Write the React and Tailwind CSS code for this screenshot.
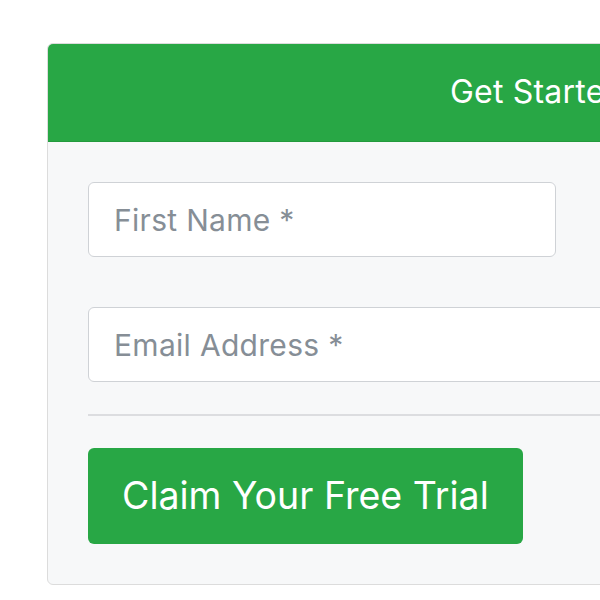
export default function App() {
  return (
    <div className="w-[600px] h-[600px] overflow-hidden bg-white" style={{ fontFamily: 'Inter, "Liberation Sans", Arial, sans-serif' }}>
      <div className="pl-[47px] pt-[43px]">
        <div className="w-[1040px] border border-[#dcdcdc] rounded-[6px] overflow-hidden bg-[#f7f8f9]">
          <div className="h-[98px] bg-[#28a745] border-b border-[#239a3d] flex items-center pl-[402px] pb-[2px]">
            <span className="text-white text-[32px] leading-none tracking-[0.2px]">Get Started Today</span>
          </div>
          <div className="px-[40px] pt-[40px] pb-[40px] flex flex-col">
            <input
              className="w-[468px] h-[75px] bg-white border-[1.5px] border-[#cfd2d6] rounded-[6px] px-[25px] text-[30px] tracking-[0.3px] text-[#495057] placeholder:text-[#868e96] outline-none"
              placeholder="First Name *"
            />
            <input
              className="mt-[50px] w-full h-[75px] bg-white border-[1.5px] border-[#cfd2d6] rounded-[6px] px-[25px] text-[30px] tracking-[0.3px] text-[#495057] placeholder:text-[#868e96] outline-none"
              placeholder="Email Address *"
            />
            <div className="mt-[32px] h-[2px] bg-[#dcdde0]" />
            <div className="mt-[32px]">
              <button className="h-[96px] px-[34px] bg-[#28a745] rounded-[6px] text-white text-[37.5px] leading-none">
                Claim Your Free Trial
              </button>
            </div>
          </div>
        </div>
      </div>
    </div>
  );
}
